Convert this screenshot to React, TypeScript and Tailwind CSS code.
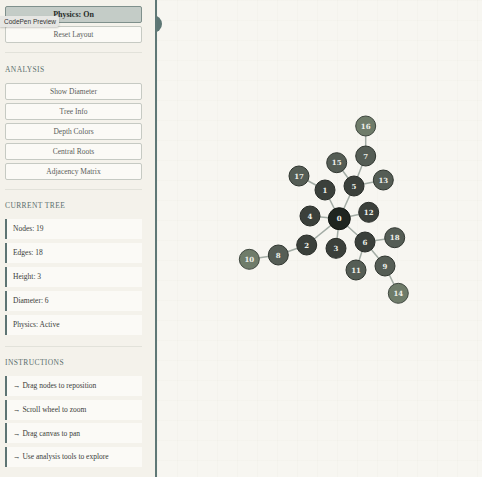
import React from "react";

const nodes: { id: number; x: number; y: number; d: number }[] = [
  { id: 0, x: 339.3, y: 218.7, d: 0 },
  { id: 1, x: 325, y: 190, d: 1 },
  { id: 2, x: 306.7, y: 245, d: 1 },
  { id: 3, x: 336, y: 248.3, d: 1 },
  { id: 4, x: 310, y: 216, d: 1 },
  { id: 5, x: 354, y: 186, d: 1 },
  { id: 6, x: 365, y: 242, d: 1 },
  { id: 12, x: 368.7, y: 212.3, d: 1 },
  { id: 7, x: 365.7, y: 156, d: 2 },
  { id: 8, x: 278.3, y: 255, d: 2 },
  { id: 9, x: 385, y: 266, d: 2 },
  { id: 11, x: 356, y: 270, d: 2 },
  { id: 13, x: 383.3, y: 180, d: 2 },
  { id: 15, x: 336.7, y: 162.7, d: 2 },
  { id: 17, x: 299, y: 176, d: 2 },
  { id: 18, x: 394.7, y: 237.7, d: 2 },
  { id: 10, x: 249.3, y: 259.3, d: 3 },
  { id: 14, x: 398.3, y: 293.3, d: 3 },
  { id: 16, x: 365.7, y: 126, d: 3 },
];

const edges: [number, number][] = [
  [0, 1], [0, 2], [0, 3], [0, 4], [0, 5], [0, 6], [0, 12],
  [1, 17], [5, 15], [5, 7], [5, 13], [7, 16], [2, 8], [8, 10],
  [6, 18], [6, 11], [6, 9], [9, 14],
];

const fills = ["#1f2520", "#3b403b", "#555d55", "#6f7c6a"];
const strokes = ["#121612", "#282c28", "#2f352f", "#3e463e"];

const OX = 157;

function Graph() {
  const byId: Record<number, { x: number; y: number; d: number }> = {};
  nodes.forEach((n) => (byId[n.id] = n));
  return (
    <svg className="absolute inset-0 w-full h-full" width="325" height="477">
      {edges.map(([a, b], i) => (
        <line
          key={i}
          x1={byId[a].x - OX}
          y1={byId[a].y}
          x2={byId[b].x - OX}
          y2={byId[b].y}
          stroke="#a3aca5"
          strokeWidth={1.5}
        />
      ))}
      {nodes.map((n) => (
        <g key={n.id}>
          <circle
            cx={n.x - OX}
            cy={n.y}
            r={n.d === 0 ? 11 : 10}
            fill={fills[n.d]}
            stroke={strokes[n.d]}
            strokeWidth={1}
          />
          <text
            x={n.x - OX}
            y={n.y + 2.5}
            textAnchor="middle"
            fontSize="7"
            fontWeight="bold"
            fill="#eef0ea"
            fontFamily="'DejaVu Serif', serif"
          >
            {n.id}
          </text>
        </g>
      ))}
    </svg>
  );
}

function Btn({ children, active }: { children: React.ReactNode; active?: boolean }) {
  return (
    <div
      className={
        active
          ? "h-[17px] flex items-center justify-center rounded-[2px] border border-[#7f908c] bg-[#c4ccc7] text-[8px] font-bold text-[#262a27]"
          : "h-[17px] flex items-center justify-center rounded-[2px] border border-[#c6cac3] bg-[#fbfaf6] text-[7.5px] text-[#5a5d5a]"
      }
    >
      {children}
    </div>
  );
}

function Heading({ children }: { children: React.ReactNode }) {
  return (
    <div className="h-[8px] text-[7.5px] tracking-[0.4px] text-[#5a6f6d] leading-[8px]">{children}</div>
  );
}

function Item({ children }: { children: React.ReactNode }) {
  return (
    <div className="h-[20px] flex items-center border-l-2 border-[#5d7473] bg-[#fbfaf6] pl-[6px] text-[7.5px] text-[#3a3c39]">
      {children}
    </div>
  );
}

export default function App() {
  return (
    <div
      className="relative flex w-[482px] h-[477px] overflow-hidden bg-[#f7f6f1]"
      style={{ fontFamily: "'Liberation Serif', 'DejaVu Serif', serif" }}
    >
      <div className="relative z-10 w-[157px] h-full shrink-0 border-r-2 border-[#5f7876] bg-[#f4f2eb] pl-[5px] pr-[13px] pt-[6px]">
        <div className="flex flex-col gap-[3px]">
          <Btn active>Physics: On</Btn>
          <Btn>Reset Layout</Btn>
        </div>
        <div className="mt-[9px] h-px bg-[#e2e2da]" />
        <div className="mt-[13px]">
          <Heading>ANALYSIS</Heading>
        </div>
        <div className="mt-[9px] flex flex-col gap-[3px]">
          <Btn>Show Diameter</Btn>
          <Btn>Tree Info</Btn>
          <Btn>Depth Colors</Btn>
          <Btn>Central Roots</Btn>
          <Btn>Adjacency Matrix</Btn>
        </div>
        <div className="mt-[9px] h-px bg-[#e2e2da]" />
        <div className="mt-[12px]">
          <Heading>CURRENT TREE</Heading>
        </div>
        <div className="mt-[9px] flex flex-col gap-[4px]">
          <Item>Nodes: 19</Item>
          <Item>Edges: 18</Item>
          <Item>Height: 3</Item>
          <Item>Diameter: 6</Item>
          <Item>Physics: Active</Item>
        </div>
        <div className="mt-[11px] h-px bg-[#e2e2da]" />
        <div className="mt-[12px]">
          <Heading>INSTRUCTIONS</Heading>
        </div>
        <div className="mt-[9px] flex flex-col gap-[3.7px]">
          <Item>→ Drag nodes to reposition</Item>
          <Item>→ Scroll wheel to zoom</Item>
          <Item>→ Drag canvas to pan</Item>
          <Item>→ Use analysis tools to explore</Item>
        </div>
      </div>
      <div className="relative flex-1 h-full bg-[#f7f6f1] bg-[linear-gradient(rgba(200,200,190,0.07)_1px,transparent_1px),linear-gradient(90deg,rgba(200,200,190,0.07)_1px,transparent_1px)] bg-[size:20px_20px]">
        <Graph />
      </div>
      <div className="absolute left-[144px] top-[15px] w-[18px] h-[18px] rounded-full bg-[#5d7674] z-0" />
      <div
        className="absolute left-0 top-[16px] z-20 h-[11px] flex items-center pl-[4px] pr-[3px] whitespace-nowrap bg-[#e6e6e3] text-[6.5px] text-[#333] shadow-[0_1px_2px_rgba(0,0,0,0.2)] rounded-r-[2px]"
        style={{ fontFamily: "'Liberation Sans', Arial, sans-serif" }}
      >
        CodePen Preview
      </div>
    </div>
  );
}
